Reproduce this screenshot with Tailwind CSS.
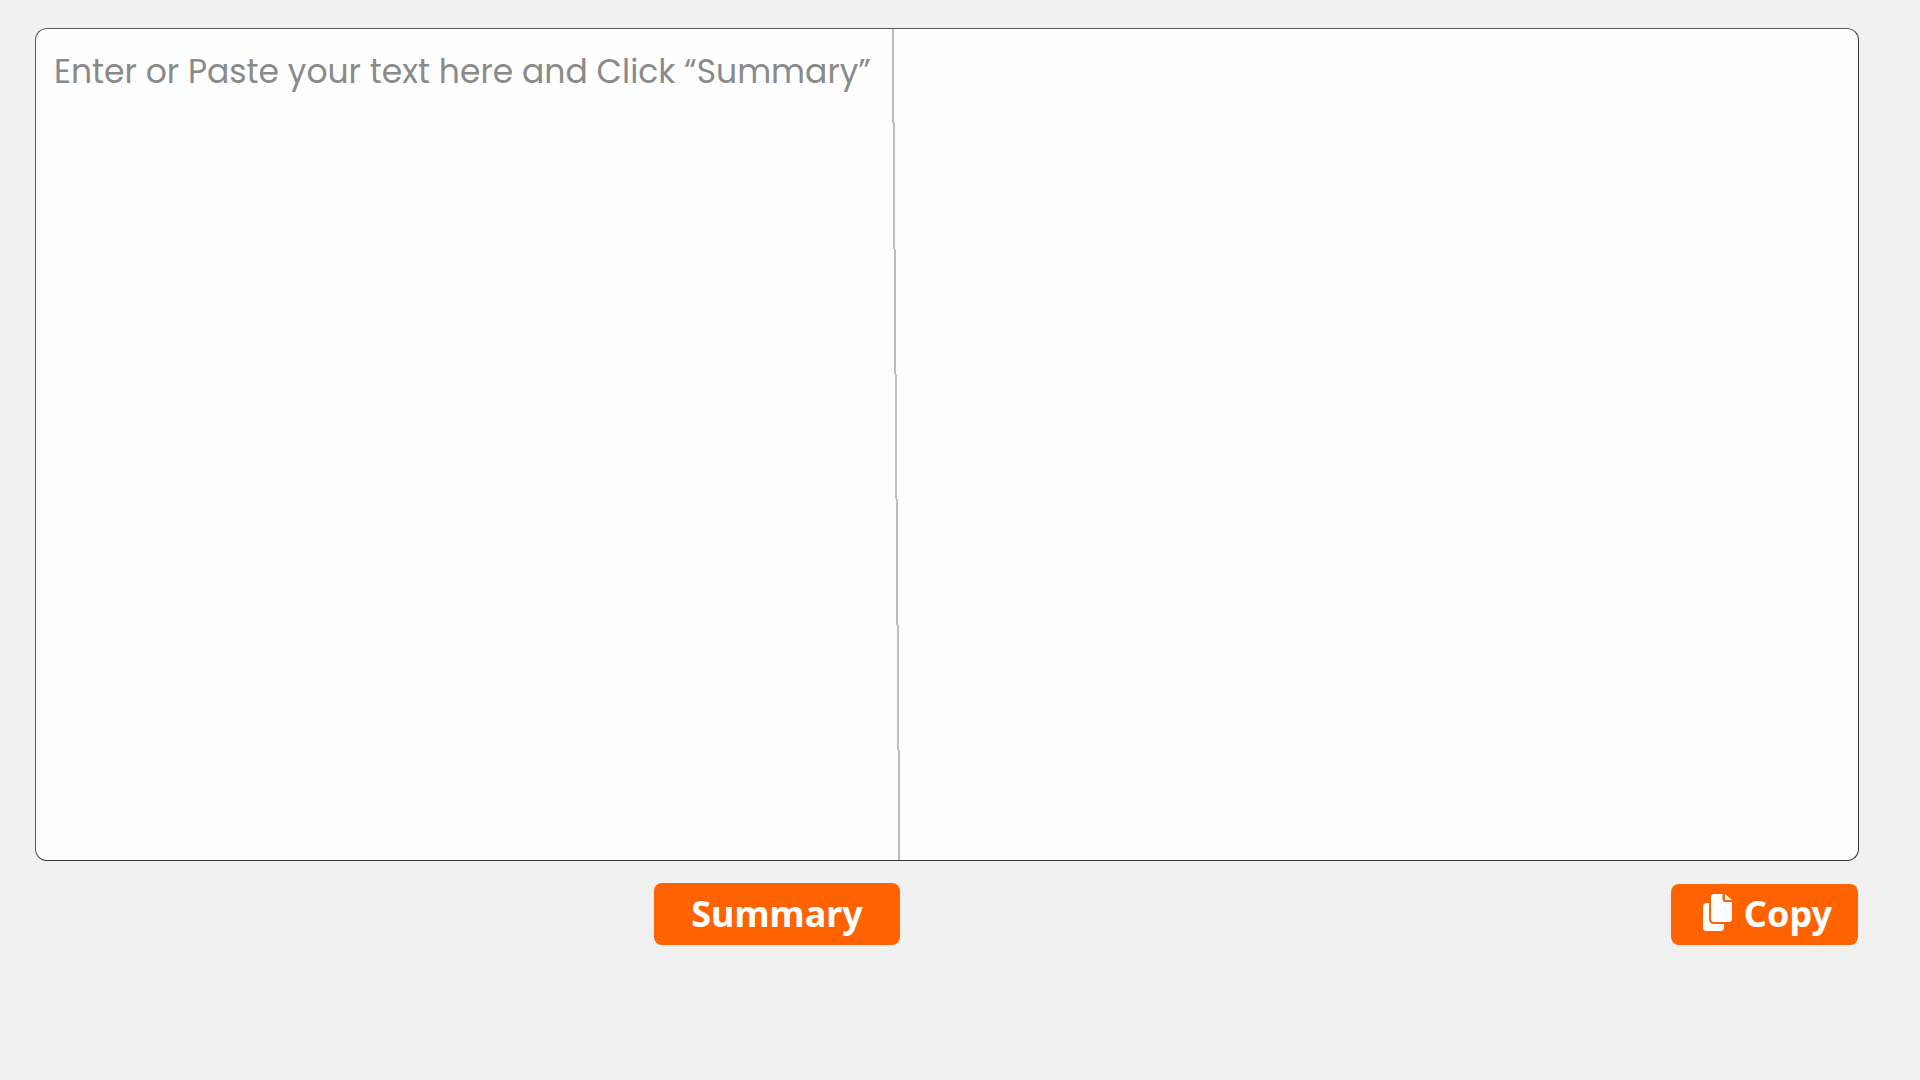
<!DOCTYPE html>
<html lang="en">
<head>
  <meta charset="UTF-8" />
  <meta name="viewport" content="width=device-width, initial-scale=1.0" />
  <title>Text Summarizer</title>
  <script src="https://cdn.jsdelivr.net/npm/@tailwindcss/browser@4"></script>
</head>
<body class="min-h-screen bg-[#f1f1f1] pt-7 pb-8 pl-[35px] pr-[61px] font-['Noto_Sans',sans-serif]">
  <main>
    <!-- Input and result panels -->
    <div class="flex overflow-hidden rounded-xl border border-[#5a5757] border-r-[#3a3535] border-b-[#3a3535] bg-[#fefefe]">
      <div class="flex w-[47.42%]">
        <textarea id="sourceText" aria-label="Text to summarize" placeholder="Enter or Paste your text here and Click “Summary”"
          class="h-[831px] min-w-0 flex-1 resize-none overflow-hidden pt-[17px] pl-[18px] font-['Poppins','Inter',sans-serif] text-[33px] leading-[52px] text-[#444] outline-none placeholder:text-[#8a8a8a]"></textarea>
        <!-- Divider -->
        <svg class="w-2 shrink-0" viewBox="0 0 8 831" preserveAspectRatio="none" shape-rendering="crispEdges" fill="#bdbdbd" aria-hidden="true">
          <path d="M0 0h2v94h-2zM1 94h2v126h-2zM2 220h2v125h-2zM3 345h2v125h-2zM4 470h2v126h-2zM5 596h2v125h-2zM6 721h2v110h-2z" />
        </svg>
      </div>
      <output id="summaryText" for="sourceText" class="flex-1 p-4 text-[33px] leading-[52px] text-[#444]"></output>
    </div>

    <!-- Actions -->
    <div class="mt-[22px] flex">
      <div class="flex w-[47.42%] justify-end">
        <button id="summaryBtn" type="button" class="h-[62px] rounded-lg bg-[#ff6200] px-[37px] text-[36px] leading-[60px] font-bold text-white">Summary</button>
      </div>
      <div class="flex flex-1 items-end justify-end">
        <button id="copyBtn" type="button" class="mr-px flex h-[61px] items-center rounded-lg bg-[#ff6200] pr-[26px] pb-px pl-8 text-[36px] leading-[60px] font-bold text-white">
          <svg class="mr-3 mb-1 h-[37px] w-[29px]" viewBox="0 0 29 37" fill="currentColor" aria-hidden="true">
            <path d="M11 0H19.500V5Q19.500 8 22.500 8H29V24.500Q29 28 25.500 28H11.500Q8 28 8 24.500V3Q8 0 11 0Z" />
            <path d="M22 0L29 6H22Z" />
            <path d="M3.500 9H6V24.500Q6 30 11.500 30H21V33.500Q21 37 17.500 37H3.500Q0 37 0 33.500V12.500Q0 9 3.500 9Z" />
          </svg>
          Copy
        </button>
      </div>
    </div>
  </main>

  <script>
    const sourceText = document.getElementById('sourceText');
    const summaryText = document.getElementById('summaryText');

    // Keep the first sentences of the text
    document.getElementById('summaryBtn').addEventListener('click', () => {
      const sentences = sourceText.value.match(/[^.!?]+[.!?]*/g) || [];
      summaryText.textContent = sentences.slice(0, 3).join('').trim();
    });

    document.getElementById('copyBtn').addEventListener('click', () => {
      navigator.clipboard.writeText(summaryText.textContent);
    });
  </script>
</body>
</html>
